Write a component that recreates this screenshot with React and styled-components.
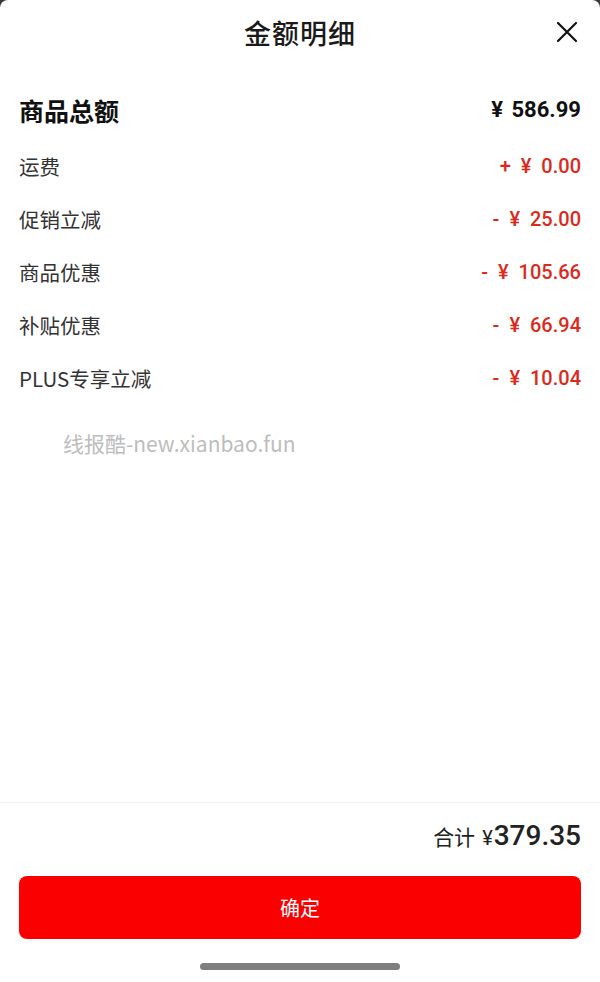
import React from "react";
import styled, { createGlobalStyle } from "styled-components";

const Global = createGlobalStyle`
  html, body { margin: 0; padding: 0; background: #3a3a3a; }
  body { font-family: "Noto Sans CJK SC", "Noto Sans", sans-serif; }
  * { box-sizing: border-box; }
`;

const Sheet = styled.div`
  width: 600px;
  height: 982px;
  background: #fff;
  border-radius: 8px 8px 0 0;
  display: flex;
  flex-direction: column;
`;

const Header = styled.div`
  height: 66px;
  display: flex;
  align-items: center;
  justify-content: center;
  position: relative;
`;

const Title = styled.h1`
  margin: 0 0 2px 0;
  font-size: 27px;
  font-weight: 500;
  color: #1a1a1a;
  letter-spacing: 1px;
`;

const Close = styled.button`
  position: absolute;
  right: 21px;
  top: 20px;
  width: 24px;
  height: 24px;
  padding: 0;
  border: 0;
  background: none;
  display: flex;
  align-items: center;
  justify-content: center;
`;

const List = styled.div`
  padding: 20px 19px 0 19px;
  display: flex;
  flex-direction: column;
`;

const Row = styled.div`
  height: 53px;
  padding-bottom: ${(p) => (p.$main ? "6px" : "0")};
  display: flex;
  align-items: center;
  justify-content: space-between;
`;

const Label = styled.span`
  font-size: ${(p) => (p.$main ? "25px" : "20.5px")};
  font-weight: ${(p) => (p.$main ? 700 : 400)};
  color: ${(p) => (p.$main ? "#111" : "#333")};
`;

const Value = styled.span`
  font-family: Roboto, "Noto Sans", sans-serif;
  font-size: ${(p) => (p.$main ? "22px" : "20px")};
  font-weight: ${(p) => (p.$main ? 700 : 500)};
  color: ${(p) => (p.$main ? "#111" : "#dc2a1c")};
  word-spacing: ${(p) => (p.$main ? "3px" : "5px")};
  white-space: pre;
`;

const Watermark = styled.div`
  margin: 24px 0 0 63px;
  font-size: 21px;
  color: #bdbdbd;
`;

const Spacer = styled.div`
  flex: 1;
`;

const Footer = styled.div`
  border-top: 1px solid #f3f3f3;
  padding: 16px 19px 0 19px;
  display: flex;
  flex-direction: column;
`;

const Total = styled.div`
  display: flex;
  justify-content: flex-end;
  align-items: baseline;
  color: #222;
  height: 40px;
`;

const TotalLabel = styled.span`
  font-size: 21px;
  margin-right: 7px;
`;

const Yen = styled.span`
  font-family: Roboto, "Noto Sans", sans-serif;
  font-size: 20px;
  margin-right: 1px;
`;

const Amount = styled.span`
  font-family: Roboto, "Noto Sans", sans-serif;
  font-size: 28px;
  font-weight: 500;
`;

const Confirm = styled.button`
  margin-top: 17px;
  height: 63px;
  width: 100%;
  border: 0;
  border-radius: 8px;
  background: #fa0000;
  color: #fff;
  font-family: "Noto Sans CJK SC", sans-serif;
  font-size: 20px;
`;

const HomeBar = styled.div`
  width: 200px;
  height: 7px;
  border-radius: 4px;
  background: #7f7f7f;
  margin: 24px auto 12px auto;
`;

const rows = [
  ["运费", "+ ¥ 0.00"],
  ["促销立减", "- ¥ 25.00"],
  ["商品优惠", "- ¥ 105.66"],
  ["补贴优惠", "- ¥ 66.94"],
  ["PLUS专享立减", "- ¥ 10.04"],
];

export default function App() {
  return (
    <>
      <Global />
      <Sheet>
        <Header>
          <Title>金额明细</Title>
          <Close aria-label="close">
            <svg width="22" height="22" viewBox="0 0 22 22">
              <path d="M2 2 L20 20 M20 2 L2 20" stroke="#111" strokeWidth="2.2" strokeLinecap="round" />
            </svg>
          </Close>
        </Header>
        <List>
          <Row $main>
            <Label $main>商品总额</Label>
            <Value $main>¥ 586.99</Value>
          </Row>
          {rows.map(([l, v]) => (
            <Row key={l}>
              <Label>{l}</Label>
              <Value>{v}</Value>
            </Row>
          ))}
        </List>
        <Watermark>线报酷-new.xianbao.fun</Watermark>
        <Spacer />
        <Footer>
          <Total>
            <TotalLabel>合计</TotalLabel>
            <Yen>¥</Yen>
            <Amount>379.35</Amount>
          </Total>
          <Confirm>确定</Confirm>
          <HomeBar />
        </Footer>
      </Sheet>
    </>
  );
}
